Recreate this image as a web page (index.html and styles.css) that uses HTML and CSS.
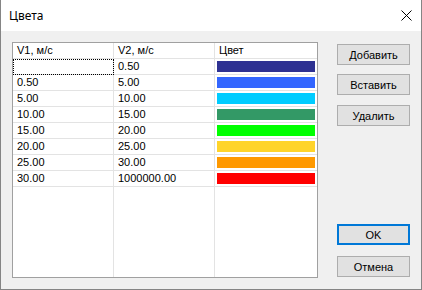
FILE: index.html
```html
<!DOCTYPE html>
<html lang="ru">
<head>
  <meta charset="UTF-8">
  <title>Цвета</title>
  <link rel="stylesheet" href="styles.css">
</head>
<body>
  <div class="window">
    <div class="titlebar">
      <span class="title">Цвета</span>
      <svg class="close" width="11" height="11" viewBox="0 0 11 11">
        <path d="M0.5 0.5 L10.5 10.5 M10.5 0.5 L0.5 10.5" stroke="#000" stroke-width="1" fill="none"/>
      </svg>
    </div>
    <div class="content">
      <div class="grid">
        <div class="cell head">V1, м/с</div>
        <div class="cell head">V2, м/с</div>
        <div class="cell head last">Цвет</div>

        <div class="cell focus"></div>
        <div class="cell">0.50</div>
        <div class="cell last"><div class="swatch" style="background:#2e3192"></div></div>

        <div class="cell">0.50</div>
        <div class="cell">5.00</div>
        <div class="cell last"><div class="swatch" style="background:#3366ff"></div></div>

        <div class="cell">5.00</div>
        <div class="cell">10.00</div>
        <div class="cell last"><div class="swatch" style="background:#00ccff"></div></div>

        <div class="cell">10.00</div>
        <div class="cell">15.00</div>
        <div class="cell last"><div class="swatch" style="background:#339966"></div></div>

        <div class="cell">15.00</div>
        <div class="cell">20.00</div>
        <div class="cell last"><div class="swatch" style="background:#00ff00"></div></div>

        <div class="cell">20.00</div>
        <div class="cell">25.00</div>
        <div class="cell last"><div class="swatch" style="background:#ffd42a"></div></div>

        <div class="cell">25.00</div>
        <div class="cell">30.00</div>
        <div class="cell last"><div class="swatch" style="background:#ff9900"></div></div>

        <div class="cell">30.00</div>
        <div class="cell">1000000.00</div>
        <div class="cell last"><div class="swatch" style="background:#ff0000"></div></div>

        <div class="cell filler"></div>
        <div class="cell filler"></div>
        <div class="cell filler last"></div>
      </div>
      <div class="buttons">
        <button class="btn add">Добавить</button>
        <button class="btn insert">Вставить</button>
        <button class="btn remove">Удалить</button>
        <button class="btn ok">OK</button>
        <button class="btn cancel">Отмена</button>
      </div>
    </div>
  </div>
</body>
</html>
```

FILE: styles.css
```css
body {
  margin: 0;
  font-family: "Liberation Sans", Arial, sans-serif;
  font-size: 11px;
  color: #000000;
  background-color: #ffffff;
}
.window {
  width: 422px;
  height: 290px;
  box-sizing: border-box;
  border: 1px solid #858585;
  border-top: none;
  display: flex;
  flex-direction: column;
}
.titlebar {
  height: 31px;
  flex-shrink: 0;
  background-color: #ffffff;
  display: flex;
  align-items: center;
  justify-content: space-between;
  padding: 0 9px 0 8px;
}
.title {
  font-family: "Noto Sans", sans-serif;
  font-size: 12px;
  margin-top: -1px;
}
.close {
  margin-top: -1px;
}
.content {
  flex: 1;
  background-color: #f0f0f0;
  display: flex;
  padding: 11px 0 0 11px;
}
.grid {
  width: 306px;
  height: 236px;
  box-sizing: border-box;
  border: 1px solid #a0a0a0;
  background-color: #ffffff;
  display: grid;
  grid-template-columns: 101px 101px 102px;
  grid-template-rows: repeat(9, 16px) 1fr;
}
.cell {
  box-sizing: border-box;
  border-right: 1px solid #e3e3e3;
  border-bottom: 1px solid #e3e3e3;
  padding: 0 4px;
  line-height: 15px;
  white-space: nowrap;
}
.cell.last {
  border-right: none;
}
.cell.filler {
  border-bottom: none;
}
.cell.focus {
  outline: 1px dotted #000000;
  outline-offset: -1px;
}
.cell.last:not(.head):not(.filler) {
  padding: 2px 2px 2px 2px;
}
.swatch {
  height: 11px;
}
.buttons {
  display: flex;
  flex-direction: column;
  margin-left: 19px;
  height: 236px;
  padding: 2px 0 1px 0;
  box-sizing: border-box;
}
.btn {
  width: 73px;
  height: 21px;
  box-sizing: border-box;
  background-color: #e1e1e1;
  border: 1px solid #adadad;
  font-family: "Liberation Sans", Arial, sans-serif;
  font-size: 11px;
  color: #000000;
  padding: 0;
}
.btn.insert {
  margin-top: 9px;
}
.btn.remove {
  margin-top: 10px;
}
.btn.ok {
  margin-top: auto;
  border: 2px solid #0078d7;
}
.btn.cancel {
  margin-top: 11px;
}
```
